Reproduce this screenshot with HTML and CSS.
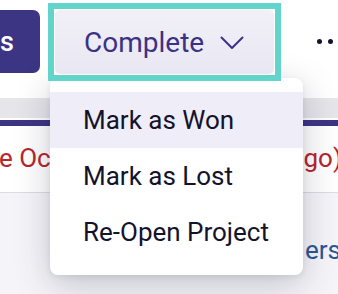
FILE: index.html
```html
<!DOCTYPE html>
<html>
<head>
<meta charset="utf-8">
<link rel="stylesheet" href="styles.css">
</head>
<body>
<div class="page">
  <div class="toolbar">
    <button class="primary">s</button>
    <span class="ring">
      <button class="complete">Complete
        <svg class="chev" width="24" height="14" viewBox="0 0 24 14"><path d="M1.5 1.5 L12 12 L22.5 1.5" fill="none" stroke="#3b3286" stroke-width="2" stroke-linecap="round" stroke-linejoin="round"/></svg>
      </button>
    </span>
    <span class="more"><i></i><i></i><i></i></span>
  </div>
  <div class="tabs"></div>
  <div class="accent"></div>
  <div class="content">
    <span class="due">e Oct</span>
    <span class="due">go)</span>
  </div>
  <div class="lower">
    <span class="link">ers</span>
  </div>
  <div class="menu">
    <div class="item active">Mark as Won</div>
    <div class="item">Mark as Lost</div>
    <div class="item">Re-Open Project</div>
  </div>
</div>
</body>
</html>
```
FILE: styles.css
```css
html, body {
  margin: 0;
  padding: 0;
  background: #fff;
}
.page {
  position: relative;
  width: 338px;
  height: 294px;
  overflow: hidden;
  font-family: Roboto, "Liberation Sans", sans-serif;
  display: flex;
  flex-direction: column;
}
.toolbar {
  height: 84px;
  display: flex;
  align-items: center;
  flex-shrink: 0;
}
.primary {
  margin-left: -20px;
  width: 60px;
  height: 63px;
  border: 0;
  border-radius: 7px;
  background: #3c3584;
  color: #fff;
  font-family: Roboto, "Liberation Sans", sans-serif;
  font-size: 27px;
  font-weight: 500;
  text-align: left;
  padding: 0 0 0 20px;
  margin-top: -1px;
  flex-shrink: 0;
}
.ring {
  position: relative;
  z-index: 2;
  margin-left: 8px;
  border: 6px solid #62d4cb;
  padding: 1px;
  background: #fff;
  display: flex;
  flex-shrink: 0;
}
.complete {
  box-sizing: border-box;
  height: 64px;
  width: 219px;
  border: 0;
  border-radius: 5px;
  background: linear-gradient(#f1eff7, #e9e7f1);
  color: #3b3286;
  font-family: Roboto, "Liberation Sans", sans-serif;
  font-size: 28px;
  display: flex;
  align-items: center;
  padding: 0 0 0 29px;
  gap: 16px;
}
.chev {
  margin-top: 2px;
}
.more {
  margin-left: 36px;
  display: flex;
  gap: 6px;
  margin-top: -2px;
  flex-shrink: 0;
}
.more i {
  width: 5px;
  height: 5px;
  border-radius: 50%;
  background: #14132b;
  flex-shrink: 0;
}
.tabs {
  margin-top: 14px;
  height: 20px;
  background: #e6e5ea;
  flex-shrink: 0;
}
.accent {
  margin-top: 2px;
  height: 6px;
  background: #3c3584;
  flex-shrink: 0;
}
.content {
  height: 66px;
  border-bottom: 1px solid #dcdbe6;
  display: flex;
  justify-content: space-between;
  align-items: center;
  flex-shrink: 0;
}
.due {
  color: #b6262d;
  font-size: 26px;
  margin-top: -2px;
}
.due:first-child {
  margin-left: -1px;
}
.due:last-child {
  margin-right: -4px;
}
.lower {
  flex: 1;
  background: #f5f5f9;
  display: flex;
  justify-content: flex-end;
  padding-top: 42px;
}
.link {
  color: #2b5797;
  font-size: 26px;
  margin-right: -3px;
  height: 30px;
}
.menu {
  position: absolute;
  left: 50px;
  top: 78px;
  width: 253px;
  height: 197px;
  background: #fff;
  border-radius: 8px;
  box-shadow: 0 10px 36px rgba(20, 20, 50, 0.22), 0 2px 6px rgba(20, 20, 50, 0.08);
  padding-top: 14px;
  box-sizing: border-box;
  z-index: 1;
}
.item {
  height: 56px;
  display: flex;
  align-items: center;
  padding-left: 33px;
  font-size: 26px;
  color: #14132b;
}
.item.active {
  background: #efedf7;
}
```
